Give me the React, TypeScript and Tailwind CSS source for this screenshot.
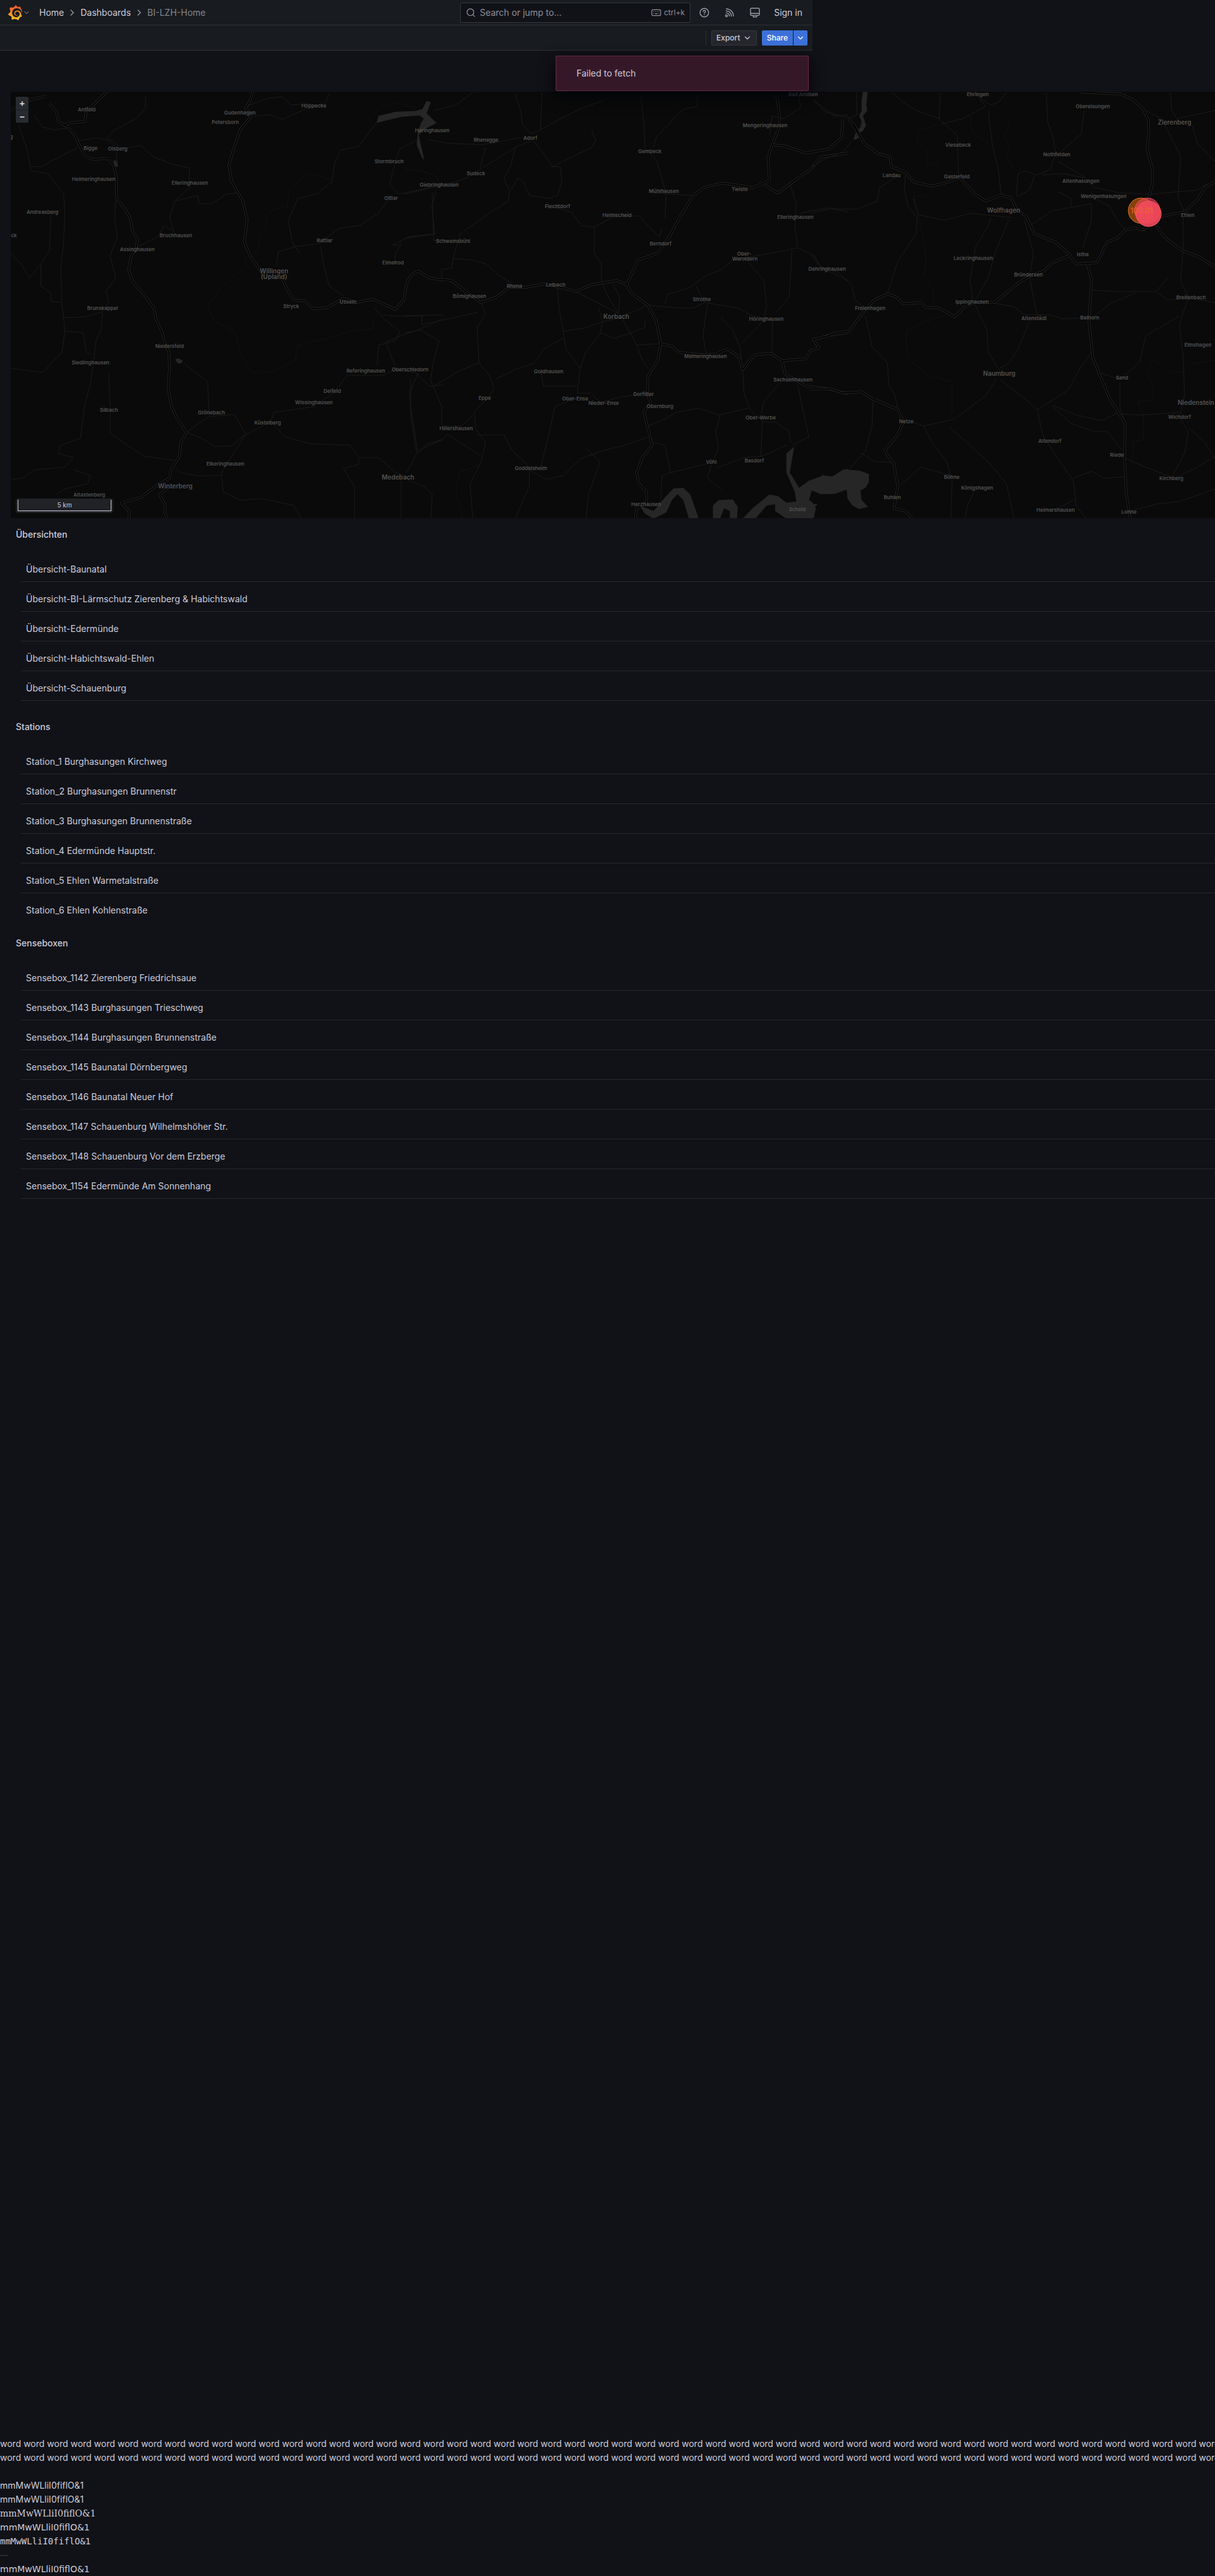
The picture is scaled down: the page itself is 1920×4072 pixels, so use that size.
import { ChevronDown, ChevronRight, Search } from "lucide-react";
import { SiGrafana } from "react-icons/si";

type Tile = {
  x: number;
  y: number;
  sx: number;
  sy: number;
  major: string[];
  minor: string[];
  dotted: string[];
  water: string[];
  labels: [string, number, number, boolean?][];
};

/* Map data, split in three sheets that each have their own grid. */
const tiles: Tile[] = [
  {
    x: 0,
    y: 140,
    sx: 2.24,
    sy: 2.306,
    major: [
      "40,80 75,58 105,42 160,28",
      "175,55 200,85 207,120 240,140 265,170 278,200 300,245 330,258 380,255 400,275 412,320 412,400 440,435 460,470 470,520 487,550 482,580 465,610 455,660 470,705 500,740 545,800 552,840 575,890 580,920 598,960 600,1020 595,1090 607,1160 625,1200 660,1253 640,1290 635,1340 605,1390 600,1420 550,1450 500,1490 430,1510 457,1540 457,1568",
      "895,10 885,45 870,70 890,100 850,150 830,210 810,280 820,340 860,410 875,480 865,560 890,620 935,680",
      "1000,695 1015,730 1040,770 1080,775 1110,803 1160,798 1215,765 1260,780 1320,768 1400,805 1430,770 1440,710 1455,680 1480,665 1520,690 1568,698",
      "228,132 245,125 300,120 305,85 345,45 380,10",
      "600,1450 565,1480 575,1500 585,1520 583,1545 592,1568",
    ],
    minor: [
      "65,130 95,220 110,300 170,310 225,385 230,460 225,560 215,660 220,790 230,880 220,960 150,1035 40,1020",
      "110,285 150,285 180,265 275,215",
      "120,95 150,140 190,150 235,145",
      "275,190 340,180 400,190 430,218 500,208 545,250 610,275 670,290 672,360 620,410 600,470 615,520 580,500 560,540 490,575",
      "515,30 515,75 480,110 400,155 380,180 415,220 410,270",
      "410,405 405,470 415,540 390,610 410,690 375,740 385,780 362,810 360,870 340,920 330,1000 320,1080 300,1150 285,1275 215,1300 205,1330 260,1345 230,1380 120,1390 80,1420 40,1425",
      "620,410 700,390 705,420 750,420 800,385 845,380",
      "900,100 950,95 1000,112 1080,75 1150,55 1165,20",
      "870,65 950,35 1000,30 1030,60 1100,55",
      "1335,120 1300,170 1270,210 1205,225 1185,270 1175,340 1120,385 1055,400 1020,480 1035,560 1060,600",
      "978,650 985,595 1050,575 1130,565 1200,510 1270,500 1340,455 1385,390",
      "1135,575 1145,640 1165,720 1215,755",
      "1480,185 1415,220 1390,300 1380,350 1410,385 1500,365 1568,345",
      "1395,640 1400,600 1420,570 1390,570 1450,540 1540,530",
      "1568,550 1535,555 1530,380",
      "1355,825 1420,830 1568,825",
      "1325,800 1360,840 1415,885 1400,920 1340,935 1335,1010",
      "1568,840 1480,880 1420,900 1365,925 1390,990 1400,1010",
      "960,1210 970,1180 1110,1160 1180,1110 1230,1045 1360,1045 1395,1025 1470,1035 1520,1085 1568,1080",
      "660,1253 715,1275 760,1305 820,1302 870,1260 960,1215 1010,1270 1100,1295 1240,1300 1270,1345 1340,1345 1400,1400 1430,1410",
      "660,1253 740,1195 830,1188 870,1260 820,1340 785,1400 790,1470 850,1500 930,1495 1040,1520 1068,1568",
      "740,1190 735,1070 650,1000",
      "620,1380 640,1400 700,1412 785,1410",
      "385,1040 390,1160 390,1255 450,1300 510,1340 615,1355",
      "230,885 295,890 305,960 320,970",
      "220,835 300,832 360,815",
      "40,600 75,640 105,690 145,640 175,590 180,460 215,445",
      "145,640 145,720 180,745 180,775 215,780",
      "1270,1345 1270,1370 1215,1385 1255,1450 1255,1568",
      "1480,1035 1450,1110 1455,1200 1475,1330 1440,1400",
      "1420,1430 1420,1568",
      "1440,1425 1500,1450 1530,1480 1525,1568",
      "1480,1330 1510,1295 1568,1280",
      "200,1480 230,1460 310,1440 320,1410 260,1390",
    ],
    dotted: [
      "870,620 870,645 780,730 735,795 760,850 830,885 850,960 890,1035 960,1035 1045,990 1055,935 1180,905 1240,885 1320,875 1325,835",
      "890,620 915,580 920,530 940,510 945,460 970,440 1015,430 1025,365 1090,310 1170,330",
      "1300,120 1360,60 1400,50 1470,70",
    ],
    water: [
      "1333,125 1340,100 1400,85 1470,82 1495,75 1510,45 1525,50 1510,90 1545,125 1500,150 1482,170 1500,250 1497,260 1475,205 1478,165 1490,125 1500,110 1485,98 1420,103",
      "620,988 630,983 648,992 640,1003 628,1000",
      "402,262 414,262 418,285 405,284",
    ],
    labels: [
      ["Antfeld", 307, 76],
      ["Gudenhagen", 848, 87],
      ["Petersborn", 797, 122],
      ["Hoppecke", 1112, 63],
      ["Bigge", 320, 216],
      ["Olsberg", 416, 219],
      ["Stormbruch", 1377, 265],
      ["Helmeringhausen", 331, 329],
      ["Elleringhausen", 672, 344],
      ["Ottlar", 1385, 398],
      ["Andreasberg", 149, 449],
      ["Bruchhausen", 622, 534],
      ["g", 41, 176],
      ["ck", 50, 534],
      ["Rattlar", 1148, 553],
      ["Assinghausen", 487, 586],
      ["Eimelrod", 1391, 633],
      ["Willingen", 971, 663, true],
      ["(Upland)", 971, 684, true],
      ["Stryck", 1031, 794],
      ["Usseln", 1231, 777],
      ["Brunskappel", 363, 801],
      ["Niedersfeld", 601, 939],
      ["Siedlinghausen", 321, 999],
      ["Referinghausen", 1294, 1028],
      ["Oberschledorn", 1452, 1023],
      ["Deifeld", 1177, 1103],
      ["Wissinghausen", 1112, 1143],
      ["Silbach", 385, 1171],
      ["Grönebach", 749, 1181],
      ["Küstelberg", 947, 1218],
      ["Elkeringhausen", 798, 1368],
      ["Medebach", 1408, 1416, true],
      ["Winterberg", 621, 1449, true],
      ["Altastenberg", 316, 1481],
    ],
  },
  {
    x: 640,
    y: 140,
    sx: 2.24,
    sy: 2.306,
    major: [
      "130,695 165,700 215,740 270,780 320,762 370,724 430,724 490,712 540,722 605,740 660,715 750,700 785,715 800,745 860,790 890,850 905,930 895,990 860,1050 858,1110 870,1150 845,1175 860,1240 875,1300 840,1345 820,1400 828,1440 855,1470 855,1510 820,1530 815,1568",
      "785,715 825,625 895,600 935,540 975,465 1020,390 1060,360 1120,345 1180,352 1230,362 1290,335 1285,250 1300,205 1325,140 1325,90 1315,20",
      "905,930 945,940 970,962 1060,970 1100,968 1140,950 1165,965 1185,985 1195,1025 1220,990 1240,970 1295,965 1335,992 1420,985 1435,955 1465,945 1445,915 1500,900 1568,890",
      "1335,992 1345,1040 1420,1085 1500,1095 1568,1112",
      "1300,205 1340,208 1420,235 1500,220 1545,180 1550,110",
      "1270,350 1320,380 1360,350 1440,290 1470,250 1568,235",
    ],
    minor: [
      "270,780 285,825 255,870 262,1000 300,1050 315,1090 300,1120 245,1180 250,1240 285,1290 270,1360 230,1440 240,1568",
      "485,15 480,150 445,165 415,130 410,80 390,20",
      "480,150 550,110 630,70 700,45",
      "445,190 390,215 280,285 230,320 180,340 0,385",
      "80,185 140,198 270,205 410,178",
      "285,215 265,290",
      "390,215 375,280 350,330 370,370 365,410 290,460 195,530 170,620 165,655 130,660 130,690",
      "455,190 500,250 520,285 550,285 555,340 540,390 510,400 440,390 420,340 400,325 375,370",
      "520,285 590,250 660,215 675,190 660,150",
      "100,80 180,60 240,15",
      "110,370 95,430 105,530 0,545",
      "520,430 590,450 625,500 670,505 740,465 830,465 860,500 900,540 910,510",
      "670,505 670,600 695,640 695,705 720,760 755,820",
      "835,30 845,120 850,220 890,260 910,330 925,390 920,470",
      "1035,20 1035,65 985,75 890,175 880,215",
      "880,380 1020,390",
      "170,620 240,625 290,640 330,680 385,715",
      "540,725 545,800 560,885 640,872 700,850 760,835 860,790",
      "605,740 680,780 755,820",
      "560,885 570,950 620,1020 610,1110 660,1110 690,1145 760,1125 850,1110",
      "620,1020 640,960 690,895 700,850 685,800",
      "690,890 740,910 790,895 850,870 850,845",
      "770,840 820,935 900,930",
      "820,935 840,990 860,1020",
      "560,910 490,950 460,1000 400,1020 320,1060",
      "480,1030 490,1085 610,1085",
      "262,1000 190,1030 100,1085 90,1060 100,1000 120,920 55,880 0,890",
      "0,828 60,828 60,860 130,845 260,815",
      "20,1060 20,1160 45,1320 130,1280 150,1260 270,1340",
      "100,1085 130,1160 130,1230 200,1230 240,1190",
      "250,1262 350,1262 380,1320 440,1380 440,1450 390,1568",
      "440,1390 500,1425 560,1410 620,1350 700,1320 780,1300 860,1270",
      "480,1380 510,1260 530,1160 600,1130",
      "640,1310 690,1360 650,1480 640,1568",
      "735,710 760,760 755,820",
      "860,790 970,800 1020,800 1060,780 1180,800 1230,830",
      "920,785 930,750 1010,725 1060,685 1120,660 1160,625 1350,590 1390,580 1450,610 1470,650 1568,700",
      "1060,780 1030,720",
      "1070,785 1055,900 1065,965",
      "1120,835 1160,880 1185,940 1190,985",
      "1190,930 1270,845 1280,790 1270,700 1205,620",
      "1315,815 1360,760 1370,590",
      "1300,845 1300,965",
      "1390,575 1380,500 1385,420 1360,340",
      "1400,455 1440,445 1500,435 1568,450",
      "1195,1025 1200,1110 1220,1170 1265,1210 1260,1340",
      "860,1230 930,1200 960,1180 1040,1165 1110,1190 1215,1165",
      "1115,1190 1100,1250 1110,1310 1085,1370 1070,1420 1120,1460",
      "875,1290 920,1300 940,1400 1080,1365",
      "1100,1385 1200,1345 1265,1340 1350,1300",
      "1265,1215 1310,1215 1360,1250 1365,1290",
      "1390,1080 1410,1180 1430,1270 1370,1300",
      "1330,1070 1270,1140 1260,1190",
      "1390,10 1400,70 1340,110 1300,100 1290,170",
      "1450,45 1520,100 1568,95",
      "940,1400 910,1410 905,1510",
    ],
    dotted: ["270,1370 190,1400 182,1480 205,1568", "0,295 60,300 110,320 120,350"],
    water: [
      "830,1520 880,1540 920,1490 950,1458 985,1455 1010,1480 1040,1568 1005,1568 985,1500 965,1478 945,1500 925,1545 880,1568 850,1550",
      "1090,1568 1090,1520 1110,1500 1160,1498 1178,1525 1175,1568 1150,1568 1150,1540 1130,1530 1115,1568",
      "1195,1568 1230,1530 1290,1480 1320,1485 1350,1510 1385,1505 1380,1470 1350,1400 1350,1330 1378,1305 1370,1350 1362,1400 1395,1455 1430,1430 1480,1410 1520,1415 1568,1385 1568,1460 1520,1478 1440,1465 1430,1500 1455,1530 1445,1568 1350,1568 1310,1540 1310,1515 1280,1520 1240,1568",
    ],
    labels: [
      ["Bad Arolsen", 1410, 20],
      ["Heringhausen", 97, 153],
      ["Mengeringhausen", 1275, 133],
      ["Rhenegge", 286, 187],
      ["Adorf", 444, 179],
      ["Gembeck", 867, 228],
      ["Sudeck", 251, 308],
      ["Giebringhausen", 121, 350],
      ["Mühlhausen", 916, 373],
      ["Twiste", 1185, 366],
      ["Flechtdorf", 539, 429],
      ["Helmscheid", 750, 461],
      ["Elleringhausen", 1383, 467],
      ["Schweinsbühl", 171, 555],
      ["Berndorf", 905, 566],
      ["Ober-", 1200, 603],
      ["Waroldern", 1202, 621],
      ["Dehringhausen", 1494, 658],
      ["Rhena", 388, 720],
      ["Lelbach", 534, 714],
      ["Bömighausen", 228, 757],
      ["Strothe", 1050, 769],
      ["Korbach", 748, 831, true],
      ["Höringhausen", 1279, 840],
      ["Meineringhausen", 1063, 975],
      ["Goldhausen", 508, 1030],
      ["Sachsenhausen", 1372, 1061],
      ["Dorfitter", 845, 1113],
      ["Eppe", 283, 1127],
      ["Ober-Ense", 602, 1130],
      ["Nieder-Ense", 704, 1146],
      ["Obernburg", 903, 1158],
      ["Ober-Werbe", 1258, 1200],
      ["Hillershausen", 182, 1238],
      ["Basdorf", 1237, 1355],
      ["Vöhl", 1084, 1360],
      ["Goddelsheim", 446, 1383],
      ["Herzhausen", 854, 1514],
      ["Scheid", 1388, 1534],
    ],
  },
  {
    x: 1280,
    y: 140,
    sx: 2.45,
    sy: 2.306,
    major: [
      "170,130 210,200 260,235 310,250 315,285 370,305 400,340 470,355 520,345 580,325 640,385 680,410 740,388 780,400 800,440 840,470 870,530 950,560 1000,600 1030,640 1110,635 1130,600 1150,560 1190,545 1220,515 1260,508 1290,515 1310,500",
      "1050,12 1200,20 1250,40 1290,75 1310,115 1312,160 1305,220 1325,290 1325,350 1312,400 1335,490 1370,540 1440,590 1510,615 1568,650",
      "1355,468 1400,458 1450,450 1500,405 1530,360 1568,340",
      "60,905 100,890 150,885 210,810 250,770 300,748 335,760 360,785 430,780 450,798 500,800 560,832 600,795 640,780 715,778 760,745 820,700 850,685 905,665 940,635 1000,610",
      "1075,640 1090,700 1080,850 1095,980 1120,1040 1160,1130 1220,1220 1218,1350 1225,1480 1240,1568",
      "0,1095 80,1095 130,1110 200,1105 240,1130 340,1170 362,1215 340,1260 290,1320 325,1370 340,1450 325,1530 370,1540 395,1568",
      "150,110 185,160",
    ],
    minor: [
      "0,290 60,255 130,230 160,190",
      "10,40 60,85 120,100 150,105",
      "180,15 182,95 150,108",
      "320,15 360,50 410,80 500,110 570,170 575,320",
      "505,15 500,110",
      "510,130 590,110 680,65 640,15",
      "660,35 700,60 730,50 760,15",
      "690,80 705,200 730,300 740,390",
      "915,15 920,120 945,190 950,240 930,295 880,315 830,300 805,310 800,390",
      "870,315 850,370 800,395",
      "960,240 1050,165 1062,80",
      "960,265 1060,320 1100,360 1200,380 1320,385 1500,370 1540,345",
      "900,315 980,310 1060,325",
      "1300,80 1360,110 1410,200 1435,250 1425,400 1450,450",
      "1395,15 1400,80 1420,110 1568,80",
      "1480,135 1500,200 1568,265",
      "370,315 365,370 380,430 415,470 410,530 340,630 300,745",
      "330,325 270,360 260,410 180,440 80,438 0,455",
      "400,400 420,460 520,480 620,455 780,470",
      "700,470 690,500 640,580 620,700 630,770",
      "770,480 720,590 690,690 640,770",
      "830,480 865,600 850,690 865,760 880,830",
      "640,790 685,880 690,960 735,1030",
      "850,850 800,960 770,1000 735,1020",
      "700,780 790,795 830,825 930,825 980,840 1080,835",
      "860,495 940,445 1090,420 1090,480 1055,580",
      "960,375 1010,400 1010,430",
      "1110,405 1160,430 1190,480 1220,515",
      "1090,735 1190,740 1340,740 1385,690",
      "1340,740 1380,770 1480,765 1568,780",
      "1445,470 1445,580 1435,700 1465,760 1430,860 1445,980 1450,1120 1430,1200 1465,1250 1450,1330 1405,1410",
      "1100,830 1170,780 1260,745",
      "1430,830 1300,900 1275,1000 1200,1060 1115,1035",
      "1200,1070 1200,1165 1220,1215",
      "940,1155 1030,1190 1130,1210 1185,1185 1290,1190 1430,1180",
      "720,1060 680,1120 560,1205 440,1230 380,1210",
      "735,1060 830,1130 880,1170 900,1260 960,1350 1020,1430 1030,1520 1070,1568",
      "880,1170 1000,1100 1045,1020 1090,960",
      "440,1230 480,1300 530,1360 550,1430 545,1568",
      "350,1445 430,1380 540,1410",
      "215,830 240,940 300,1000 305,1080 330,1120 340,1170",
      "245,1130 240,1230 215,1320 150,1390",
      "0,600 40,650 110,670 160,715 175,770 220,810",
      "940,1160 1010,1220 1100,1250 1150,1250 1210,1320",
      "1225,1350 1300,1380 1410,1420 1500,1380 1568,1340",
      "1240,1540 1340,1515 1430,1505 1568,1460",
      "1020,1420 1090,1395 1140,1420 1220,1415",
      "1470,1240 1530,1290 1568,1350",
      "960,1530 1020,1500",
      "540,1235 620,1300 700,1370 760,1440 790,1568",
      "640,1460 610,1520 600,1568",
      "200,1330 250,1360 320,1362",
    ],
    dotted: [
      "620,100 630,160 700,205",
      "510,130 420,150 415,190 450,220 455,270 500,280",
      "730,90 775,130 750,180 775,210 760,240 790,300",
      "480,360 450,390 400,390 440,540 450,640 440,680 480,740 480,790",
      "540,820 450,850 375,880 370,930 385,990 460,1045 550,1070 550,1200",
      "1568,990 1470,1005 1450,1030 1400,1035 1330,990 1300,1040 1330,1080 1330,1135 1270,1140 1290,1190 1290,1280 1250,1285 1250,1350",
    ],
    water: [
      "205,12 223,12 218,60 222,80 205,100 217,135 205,155 180,165 190,180 168,188 175,165 195,140 200,120 190,100 200,80 200,40",
      "0,1432 45,1420 50,1405 55,1420 80,1418 130,1388 190,1392 228,1405 228,1435 215,1455 195,1465 200,1500 225,1525 190,1533 165,1520 145,1495 142,1462 120,1465 80,1478 40,1478 0,1462",
      "0,1500 15,1515 30,1515 8,1535 18,1560 0,1568",
    ],
    labels: [
      ["Ehringen", 649, 20],
      ["Oberelsungen", 1094, 64],
      ["Zierenberg", 1412, 122, true],
      ["Viesebeck", 574, 206],
      ["Nothfelden", 955, 240],
      ["Landau", 317, 315],
      ["Gasterfeld", 568, 320],
      ["Altenhasungen", 1048, 336],
      ["Wenigenhasungen", 1136, 392],
      ["Wolfhagen", 750, 442, true],
      ["Ehlen", 1463, 461],
      ["Istha", 1056, 604],
      ["Leckringhausen", 631, 617],
      ["Bründersen", 846, 678],
      ["Breitenbach", 1476, 762],
      ["Ippinghausen", 627, 778],
      ["Freienhagen", 232, 800],
      ["Altenstädt", 868, 836],
      ["Balhorn", 1082, 834],
      ["Elmshagen", 1502, 934],
      ["Naumburg", 733, 1037, true],
      ["Sand", 1209, 1053],
      ["Niedenstein", 1495, 1144, true],
      ["Wichdorf", 1430, 1197],
      ["Netze", 373, 1212],
      ["Altendorf", 929, 1285],
      ["Riede", 1189, 1335],
      ["Böhne", 550, 1417],
      ["Kirchberg", 1399, 1421],
      ["Königshagen", 647, 1455],
      ["Buhlen", 319, 1489],
      ["Heimarshausen", 950, 1535],
      ["Lohne", 1236, 1542],
    ],
  },
];

const sections: { title: string; gap: string; last: string; links: string[] }[] = [
  {
    title: "Übersichten",
    gap: "mt-[10px]",
    last: "last:border-[#26282d]",
    links: [
      "Übersicht-Baunatal",
      "Übersicht-BI-Lärmschutz Zierenberg & Habichtswald",
      "Übersicht-Edermünde",
      "Übersicht-Habichtswald-Ehlen",
      "Übersicht-Schauenburg",
    ],
  },
  {
    title: "Stations",
    gap: "mt-[25px]",
    last: "last:border-transparent",
    links: [
      "Station_1 Burghasungen Kirchweg",
      "Station_2 Burghasungen Brunnenstr",
      "Station_3 Burghasungen Brunnenstraße",
      "Station_4 Edermünde Hauptstr.",
      "Station_5 Ehlen Warmetalstraße",
      "Station_6 Ehlen Kohlenstraße",
    ],
  },
  {
    title: "Senseboxen",
    gap: "mt-4",
    last: "last:border-[#26282d]",
    links: [
      "Sensebox_1142 Zierenberg Friedrichsaue",
      "Sensebox_1143 Burghasungen Trieschweg",
      "Sensebox_1144 Burghasungen Brunnenstraße",
      "Sensebox_1145 Baunatal Dörnbergweg",
      "Sensebox_1146 Baunatal Neuer Hof",
      "Sensebox_1147 Schauenburg Wilhelmshöher Str.",
      "Sensebox_1148 Schauenburg Vor dem Erzberge",
      "Sensebox_1154 Edermünde Am Sonnenhang",
    ],
  },
];

const words = Array(60).fill("word").join(" ");
const sample = "mmMwWLliI0fiflO&1";

function KeyboardIcon() {
  return (
    <svg viewBox="0 0 16 16" className="size-4" fill="none" stroke="currentColor" strokeWidth="1.3" strokeLinecap="round">
      <rect x="1" y="3.4" width="14" height="9.2" rx="1.6" />
      <path d="M3.8 6.2h.1M6.6 6.2h.1M9.4 6.2h.1M12.1 6.2h.1M3.8 9.6h.1M6.4 9.6h3.2M12.1 9.6h.1" />
    </svg>
  );
}

function HelpIcon() {
  return (
    <svg viewBox="0 0 16 16" className="size-4" fill="none" stroke="currentColor" strokeWidth="1.4" strokeLinecap="round">
      <circle cx="8" cy="8" r="6.8" />
      <path d="M6.2 6.3a1.8 1.8 0 1 1 2.6 1.6c-.5.3-.8.5-.8 1" />
      <path d="M8 11.2v.1" strokeWidth="1.6" />
    </svg>
  );
}

function RssIcon() {
  return (
    <svg viewBox="0 0 16 16" className="size-4" fill="none" stroke="currentColor" strokeWidth="1.4" strokeLinecap="round">
      <circle cx="3" cy="13" r="1.5" />
      <path d="M2.6 8.4a5 5 0 0 1 5 5M2.6 5.2a8.2 8.2 0 0 1 8.2 8.2M2.6 2a11.4 11.4 0 0 1 11.4 11.4" />
    </svg>
  );
}

function MonitorIcon() {
  return (
    <svg viewBox="0 0 16 16" className="size-4" fill="none" stroke="currentColor" strokeWidth="1.4" strokeLinejoin="round">
      <rect x="1" y="1" width="14" height="11.4" rx="1.6" />
      <path d="M1 9.2h14M5.2 12.6v2.2h5.6v-2.2" />
    </svg>
  );
}

function MapDrawing() {
  return (
    <svg viewBox="17 145 1903 674" preserveAspectRatio="xMinYMin slice" className="block h-full w-full" role="img" aria-label="Map">
      <rect x="0" y="0" width="1920" height="900" fill="#0a0a0a" />
      {tiles.map((t) => (
        <g key={t.x + "r"} transform={`translate(${t.x} ${t.y}) scale(${1 / t.sx} ${1 / t.sy})`} fill="none" strokeLinejoin="round">
          {t.water.map((p) => (
            <polygon key={p} points={p} fill="#262626" />
          ))}
          {t.minor.map((p) => (
            <polyline key={p} points={p} stroke="#1b1b1b" strokeWidth="1" vectorEffect="non-scaling-stroke" />
          ))}
          {t.dotted.map((p) => (
            <polyline key={p} points={p} stroke="#202020" strokeWidth="1" strokeDasharray="1 2" vectorEffect="non-scaling-stroke" />
          ))}
          {t.major.map((p) => (
            <polyline key={p} points={p} stroke="#222222" strokeWidth="4" vectorEffect="non-scaling-stroke" />
          ))}
          {t.major.map((p) => (
            <polyline key={p + "c"} points={p} stroke="#030303" strokeWidth="2" vectorEffect="non-scaling-stroke" />
          ))}
        </g>
      ))}
      <g textAnchor="middle" fontFamily="Inter, sans-serif" fontWeight="600" fill="#525252">
        {tiles.map((t) =>
          t.labels.map(([name, x, y, town]) => (
            <text
              key={t.x + name}
              x={Math.round(t.x + x / t.sx)}
              y={Math.round(t.y + y / t.sy) + (town ? 4 : 3)}
              fontSize={town ? 10 : 8}
            >
              {name}
            </text>
          )),
        )}
      </g>
      <g>
        <circle cx="1803" cy="333" r="20" fill="#ff780a" fillOpacity="0.5" stroke="#e0752a" />
        <circle cx="1813" cy="333" r="20" fill="#f2495c" fillOpacity="0.6" stroke="#f2495c" />
        <circle cx="1815" cy="338" r="20" fill="#f2495c" fillOpacity="0.9" stroke="#ff5468" />
        <text x="1804" y="337" textAnchor="middle" fontFamily="Inter, sans-serif" fontSize="12" fill="#ee6a2c">
          100.01
        </text>
      </g>
    </svg>
  );
}

export default function App() {
  return (
    <div className="flex min-h-screen flex-col overflow-hidden bg-[#111217] font-['Inter',sans-serif] text-sm/[22px] text-[#ccccdc]">
      <header className="relative z-10 w-full max-w-[1284px] bg-[#181b1f]">
        <div className="flex h-10 items-center border-b border-[#2e3035] px-3">
          <svg width="0" height="0" aria-hidden="true" className="absolute">
            <linearGradient id="flame" x1="0" y1="0" x2="0" y2="1">
              <stop offset="0" stopColor="#f0502c" />
              <stop offset="1" stopColor="#fcc81f" />
            </linearGradient>
          </svg>
          <button aria-label="Open menu" className="flex items-center">
            <SiGrafana className="size-6" fill="url(#flame)" />
            <ChevronDown className="size-3 text-[#9a9ba6]" />
          </button>
          <nav aria-label="Breadcrumbs" className="ml-3.5 flex items-center gap-[5px]">
            <a href="#home">Home</a>
            <ChevronRight className="size-4 text-[#9a9ba6]" />
            <a href="#dashboards">Dashboards</a>
            <ChevronRight className="size-4 text-[#9a9ba6]" />
            <span className="text-[#82838d]">BI-LZH-Home</span>
          </nav>
          <label className="ml-auto flex h-8 w-[364px] items-center rounded-xs border border-[#35373c] bg-[#111217] px-2 text-[#8e8e99]">
            <Search className="size-4" strokeWidth={2} />
            <input
              aria-label="Search or jump to"
              placeholder="Search or jump to..."
              className="ml-1.5 min-w-0 flex-1 bg-transparent outline-none placeholder:text-[#8e8e99]"
            />
            <KeyboardIcon />
            <kbd className="ml-1 font-['Inter',sans-serif] text-xs">ctrl+k</kbd>
          </label>
          <div className="ml-1.5 flex items-center gap-2 text-[#9a9ba6]">
            <button aria-label="Help" className="flex size-8 items-center justify-center">
              <HelpIcon />
            </button>
            <button aria-label="News" className="flex size-8 items-center justify-center">
              <RssIcon />
            </button>
            <button aria-label="Kiosk mode" className="flex size-8 items-center justify-center">
              <MonitorIcon />
            </button>
          </div>
          <a href="#signin" className="mr-1 ml-3.5">
            Sign in
          </a>
        </div>
        <div className="flex h-10 items-center justify-end border-b border-[#2e3035] px-2 text-xs font-medium">
          <span className="mr-2 h-6 w-px bg-[#2b2d32]" />
          <button className="mr-2 flex h-6 w-18 items-center justify-center gap-1 rounded-xs border border-[#35373c] bg-[#25272c]">
            Export
            <ChevronDown className="size-3.5" />
          </button>
          <button className="h-6 rounded-l-xs bg-[#3d71d9] px-2 text-white">Share</button>
          <button aria-label="Share options" className="ml-px flex h-6 w-[22px] items-center justify-center rounded-r-xs bg-[#3d71d9] text-white">
            <ChevronDown className="size-3.5" />
          </button>
        </div>
        <div
          role="alert"
          className="absolute top-22 right-1.5 flex h-14 w-[400px] items-center rounded-xs border border-[#66293f] bg-[#351828] px-8 shadow-[0_8px_24px_#010409]"
        >
          Failed to fetch
        </div>
      </header>

      <main className="mt-[65px] pl-[17px]">
        <div className="relative h-[674px] overflow-hidden">
          <MapDrawing />
          <div className="absolute top-2 left-2 flex w-5 flex-col gap-px overflow-hidden rounded-xs bg-[#1d1f23] font-bold">
            <button aria-label="Zoom in" className="flex h-5 items-center justify-center bg-[#272a2f]">
              +
            </button>
            <button aria-label="Zoom out" className="flex h-5 items-center justify-center bg-[#272a2f]">
              −
            </button>
          </div>
          <div className="absolute bottom-2 left-2 w-[154px] rounded-sm bg-[#202226] px-[3px] pt-0.5 pb-[3px]">
            <div className="h-[18px] border border-t-0 border-[#ccccdc] text-center text-[10px]/[16px]">5 km</div>
          </div>
        </div>

        {sections.map((s) => (
          <section key={s.title} className={s.gap}>
            <h2 className="flex h-8 items-center pl-2 font-medium">{s.title}</h2>
            <ul className="mt-3 pl-4">
              {s.links.map((l) => (
                <li key={l} className={`border-b border-[#26282d] pt-4 pb-2 pl-2 ${s.last}`}>
                  <a href="#dashboard" className="block">
                    {l}
                  </a>
                </li>
              ))}
            </ul>
          </section>
        ))}
      </main>

      <div className="mt-auto whitespace-nowrap">
        <p>{words}</p>
        <p>{words}</p>
        <div className="h-[22px]" />
        <p>{sample}</p>
        <p>{sample}</p>
        <p className="font-['DejaVu_Serif',serif]">{sample}</p>
        <p className="font-['DejaVu_Sans',sans-serif]">{sample}</p>
        <p className="font-['DejaVu_Sans_Mono',monospace]">{sample}</p>
        <div className="flex h-[22px] items-center">
          <span className="h-px w-3 bg-[#3c3e42]" />
        </div>
        <p className="font-['DejaVu_Sans',sans-serif]">{sample}</p>
      </div>
    </div>
  );
}
